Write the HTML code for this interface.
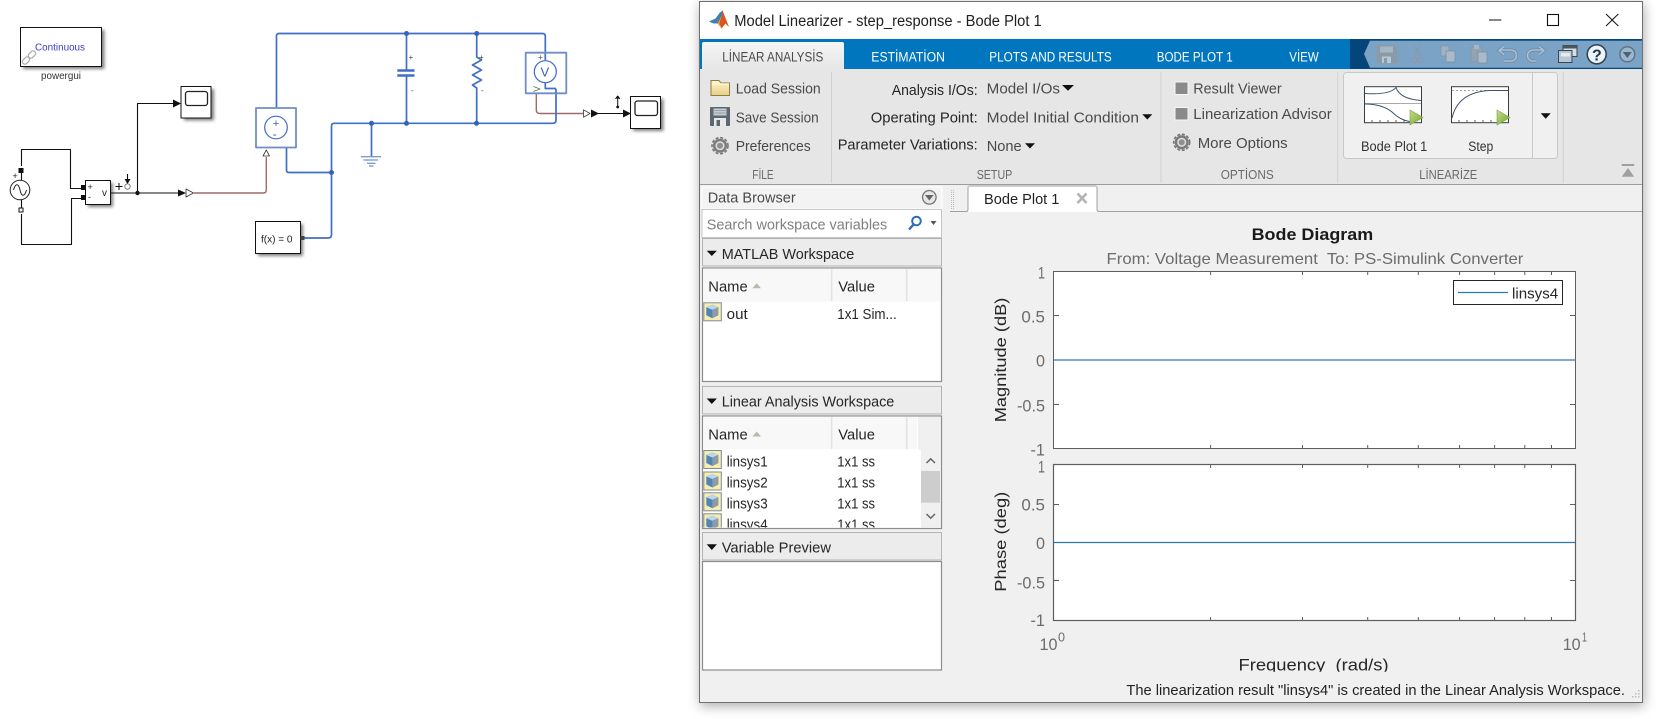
<!DOCTYPE html>
<html><head><meta charset="utf-8"><title>Model Linearizer</title>
<style>
html,body{margin:0;padding:0;background:#fff;width:1659px;height:719px;overflow:hidden}
svg{display:block;position:absolute;left:0;top:0}
text{font-family:"Liberation Sans",sans-serif;white-space:pre}
.r{font-size:15px;fill:#4a4a4a;transform:translateY(-.8px)}
.d{font-size:15px;fill:#262626}
.s{font-size:13px;fill:#6a6a6a}
.t{font-size:13.5px;fill:#fff}
.a{font-size:17px;fill:#6c6c6c}
</style></head><body>
<svg width="1659" height="719" viewBox="0 0 1659 719" xmlns="http://www.w3.org/2000/svg">
<defs>
<filter id="bs" x="-30%" y="-30%" width="160%" height="160%"><feGaussianBlur stdDeviation="1.6"/></filter>
<filter id="ws" x="-5%" y="-5%" width="110%" height="110%"><feGaussianBlur stdDeviation="6"/></filter>
<linearGradient id="fold" x1="0" y1="0" x2="0" y2="1"><stop offset="0" stop-color="#fff6cf"/><stop offset="1" stop-color="#e8cf82"/></linearGradient>
<linearGradient id="tabg" x1="0" y1="0" x2="0" y2="1"><stop offset="0" stop-color="#f5f5f5"/><stop offset="1" stop-color="#e6e6e6"/></linearGradient>
<linearGradient id="play" x1="0" y1="0" x2="1" y2="1"><stop offset="0" stop-color="#c4dc86"/><stop offset="1" stop-color="#6fa82e"/></linearGradient>
<g id="cube">
<rect x="0.5" y="0.5" width="17.5" height="18" fill="#f6eeb0" stroke="#7f8a98" stroke-width="1"/>
<path d="M3 5 L9 2.5 L15 5 L15 13 L9 16 L3 13Z" fill="#4f86b8"/>
<path d="M3 5 L9 2.5 L15 5 L9 7.5Z" fill="#b9d6ea"/>
<path d="M9 7.5 L15 5 L15 13 L9 16Z" fill="#8f9aa6"/>
</g>
<g id="gear">
<circle r="8" fill="none" stroke="#777" stroke-width="1.600" stroke-dasharray="3 1.700"/>
<circle r="7" fill="#7b7b7b"/>
<circle r="4.600" fill="#dcdcdc"/>
<circle r="3" fill="#8f8f8f"/>
</g>
<g id="play1"><path d="M0 0 L13 7.5 L0 15Z" fill="url(#play)" stroke="#7f9f52" stroke-width=".6"/></g>
</defs>

<rect width="1659" height="719" fill="#fff"/>

<!-- Simulink diagram -->
<g fill="none" stroke-linejoin="round">
 <g fill="#555" stroke="none" filter="url(#bs)" opacity=".75">
  <rect x="23" y="30" width="81.500" height="39"/>
  <rect x="184" y="89" width="30" height="31.500"/>
  <rect x="88" y="183" width="25" height="24"/>
  <rect x="258" y="224" width="45" height="32"/>
  <rect x="633" y="99" width="30.500" height="32"/>
 </g>
 <rect x="20.500" y="27.500" width="81" height="39" fill="#fff" stroke="#111" stroke-width="1"/>
 <rect x="181" y="86.500" width="30" height="31.500" fill="#fff" stroke="#111" stroke-width="1"/>
 <rect x="185.500" y="91.500" width="22" height="14" rx="2.500" stroke="#222" stroke-width="1.300"/>
 <rect x="85.500" y="180.500" width="25" height="24" fill="#fff" stroke="#111" stroke-width="1"/>
 <rect x="255.500" y="221.500" width="45" height="32" fill="#fff" stroke="#111" stroke-width="1"/>
 <rect x="630.500" y="96.500" width="30" height="32" fill="#fff" stroke="#111" stroke-width="1"/>
 <rect x="635" y="101" width="22.500" height="14.500" rx="2.500" stroke="#222" stroke-width="1.300"/>

 <g stroke="#111" stroke-width="1.100">
  <path d="M21.500 166 V149.500 H70.500 V188.500 H81"/>
  <path d="M21.500 214 V244.500 H71.500 V198.500 H81"/>
  <path d="M111 193 H178"/>
  <path d="M137.500 193 V103.500 H174"/>
  <path d="M598 113.500 H624"/>
  <path d="M127.500 174 V181"/>
  <path d="M21.500 170 V180 M21.500 200 V210"/>
 </g>
 <g fill="#111" stroke="none">
  <path d="M173 99.500 L181 103.500 L173 107.500Z"/>
  <path d="M178 189.500 L186 193 L178 196.500Z"/>
  <path d="M591 109.500 L599 113.500 L591 117.500Z"/>
  <path d="M623 109.500 L631 113.500 L623 117.500Z"/>
  <path d="M124.500 179 L130.500 179 L127.500 184Z"/>
  <circle cx="137.500" cy="193" r="2.200"/>
  <rect x="18.500" y="168" width="5" height="5"/>
  <rect x="81" y="185" width="5" height="5"/>
  <rect x="81" y="195" width="5" height="5"/>
  <rect x="300.500" y="236" width="4" height="4" fill="#444"/>
  <circle cx="617.700" cy="97.500" r="1.400"/><circle cx="617.700" cy="107" r="1.400"/>
 </g>
 <rect x="19" y="208" width="4" height="4" fill="#fff" stroke="#111" stroke-width="1"/>
 <path d="M617.700 97 V107 M615.500 99 L617.700 96 L619.900 99" stroke="#111" stroke-width="1"/>
 <circle cx="20" cy="190" r="9.800" fill="#fff" stroke="#222" stroke-width="1"/>
 <path d="M13.500 190 C15.500 183 18.500 183 20 190 C21.500 197 24.500 197 26.500 190" stroke="#222" stroke-width="1"/>
 <path d="M119 183 V190 M115.500 186.500 H122.500" stroke="#111" stroke-width="1"/>
 <circle cx="127.500" cy="186.500" r="2.700" stroke="#666" stroke-width=".8" fill="#fff"/>
 <path d="M186 189 L193.500 193 L186 197Z" fill="#fff" stroke="#333" stroke-width=".8"/>
 <path d="M583.500 109.800 L590 113.500 L583.500 117.200Z" fill="#fff" stroke="#333" stroke-width=".8"/>
 <path d="M263 156 L266.300 150 L269.500 156Z" fill="#fff" stroke="#333" stroke-width=".8"/>
 <path d="M194 193 H263.500 Q266.300 193 266.300 190 V157" stroke="#a06a6a" stroke-width="1.400"/>
 <path d="M536.300 94 V110 Q536.300 113.500 540 113.500 H583" stroke="#a06a6a" stroke-width="1.400"/>

 <g stroke="#3f6fc6" stroke-width="1.700">
  <path d="M276.500 108 V36 Q276.500 33.500 279 33.500 H542.500 Q545.300 33.500 545.300 36.500 V60"/>
  <path d="M286.500 147.500 V170 Q286.500 172.500 289 172.500 H331.500"/>
  <path d="M304.500 238 H328 Q331.500 238 331.500 234.500 V126 Q331.500 123.300 334 123.300 H553 Q556 123.300 556 120 V89"/>
  <path d="M371.500 123 V156"/>
  <path d="M406.500 33.500 V70 M406.500 75.500 V123"/>
  <path d="M476.700 33.500 V57 L481.500 60 L472.500 65 L481.500 70 L472.500 75 L481.500 80 L472.500 85 L476.700 88 V123"/>
  <path d="M545.300 83 V88.500 H556"/>
 </g>
 <g stroke="#3f6fc6" stroke-width="2.500"><path d="M397.300 70.500 H414.500 M397.300 75.500 H414.500"/></g>
 <g stroke="#4f78c4" stroke-width="1"><path d="M361 156.700 H381 M363.500 160 H378 M367 163.300 H375.500 M369 166 H373.500"/></g>
 <g fill="#3563b8" stroke="none">
  <circle cx="331.500" cy="172.500" r="2.500"/><circle cx="371.500" cy="123.300" r="2.500"/>
  <circle cx="406.500" cy="123.300" r="2.500"/><circle cx="476.500" cy="123.300" r="2.500"/>
  <circle cx="406.500" cy="33.500" r="2.500"/><circle cx="476.700" cy="33.500" r="2.500"/>
 </g>
 <rect x="256" y="108" width="40" height="39.500" stroke="#6f8ec8" stroke-width="1.800" fill="none"/>
 <circle cx="276" cy="127.500" r="11.300" stroke="#3f6ac4" stroke-width="1.200"/>
 <rect x="525.700" y="52.700" width="40.600" height="40.600" stroke="#6f8ec8" stroke-width="1.800" fill="none"/>
 <circle cx="545.300" cy="71.700" r="11" stroke="#3f6ac4" stroke-width="1.200" fill="#fff"/>
 <path d="M533.500 86.500 L540 89 L533.500 91.500" stroke="#55754f" stroke-width=".9"/>
 <path d="M556 88.500 V93" stroke="#3f6fc6" stroke-width="1"/>
 <g stroke="#aaa" stroke-width="1.200"><rect x="22" y="58" width="8" height="5" rx="2.200" transform="rotate(-45 26 60.500)"/><rect x="28" y="52" width="8" height="5" rx="2.200" transform="rotate(-45 32 54.500)"/></g>
</g>
<g font-size="10">
 <text x="35" y="50.500" style="font-size:10px;fill:#3a3ac8" textLength="50" lengthAdjust="spacingAndGlyphs">Continuous</text>
 <text x="41" y="79" style="font-size:10px;fill:#333" textLength="40" lengthAdjust="spacingAndGlyphs">powergui</text>
 <text x="261" y="242.500" style="font-size:10px;fill:#222" textLength="31.500" lengthAdjust="spacingAndGlyphs">f(x) = 0</text>
 <text x="102" y="196" style="font-size:10px;fill:#222">v</text>
 <text x="87.500" y="190" style="font-size:9px;fill:#222">+</text>
 <text x="88" y="200" style="font-size:9px;fill:#222">-</text>
 <text x="12.500" y="179" style="font-size:9px;fill:#222">+</text>
 <text x="272.800" y="127" style="font-size:11px;fill:#3a60b8">+</text>
 <text x="272.800" y="138" style="font-size:12px;fill:#3a60b8">-</text>
 <text x="540.500" y="76.500" style="font-size:13px;fill:#3a60b8">V</text>
 <text x="408.500" y="60" style="font-size:8px;fill:#444">+</text>
 <text x="411" y="93" style="font-size:8px;fill:#444">-</text>
 <text x="479" y="60" style="font-size:8px;fill:#444">+</text>
 <text x="481" y="93" style="font-size:8px;fill:#444">-</text>
 <text x="538" y="60" style="font-size:8px;fill:#444">+</text>
</g>

<!-- Window shadow + frame -->
<rect x="700" y="4" width="944" height="702" fill="#000" opacity=".33" filter="url(#ws)"/>
<rect x="699.500" y="1.500" width="943" height="701" fill="#f0f0f0" stroke="#6f6f6f" stroke-width="1"/>
<rect x="700" y="2" width="942" height="37" fill="#fff"/>

<!-- Title bar -->
<path d="M709 21.500 L715.500 18.500 L719.500 13 L722.500 10.500 L725 18 L722 27 L717.500 23.500 L713.500 23.500Z" fill="#3f7fb2"/>
<path d="M722.500 10.500 L729 27 L725.500 23.500 L721.500 28.500 L719.500 23 L722 15Z" fill="#d9541e"/>
<path d="M722 15 L719.500 23 L721.500 28.500 L717.500 23.500Z" fill="#ea9a3a"/>
<text x="734.300" y="26" style="font-size:15.500px;fill:#1f1f1f" textLength="307.400" lengthAdjust="spacingAndGlyphs">Model Linearizer - step_response - Bode Plot 1</text>
<path d="M1489 20 H1501.300" stroke="#111" stroke-width="1"/>
<rect x="1547.500" y="14.500" width="11" height="11" fill="none" stroke="#111" stroke-width="1.100"/>
<path d="M1606 14 L1618.300 26 M1618.300 14 L1606 26" stroke="#111" stroke-width="1"/>

<!-- Tab strip -->
<rect x="700" y="39" width="942" height="30" fill="#0076bf"/>
<rect x="1350" y="39" width="292" height="30" fill="#04467c"/>
<path d="M1364 54 L1370 40.700 H1642 V67.700 H1370Z" fill="#7ba3c6"/>
<path d="M702 44 Q702 42 704 42 H842 Q844 42 844 44 V69 H702Z" fill="url(#tabg)"/>
<text x="722.300" y="61.300" style="font-size:13.500px;fill:#4a4a4a" textLength="101" lengthAdjust="spacingAndGlyphs">LİNEAR ANALYSİS</text>
<text class="t" x="871.300" y="61.300" textLength="73.700" lengthAdjust="spacingAndGlyphs">ESTİMATİON</text>
<text class="t" x="989.300" y="61.300" textLength="122.400" lengthAdjust="spacingAndGlyphs">PLOTS AND RESULTS</text>
<text class="t" x="1156.700" y="61.300" textLength="76" lengthAdjust="spacingAndGlyphs">BODE PLOT 1</text>
<text class="t" x="1289.300" y="61.300" textLength="29.400" lengthAdjust="spacingAndGlyphs">VİEW</text>

<!-- Quick access icons -->
<g>
 <path d="M1377 45 H1394 L1397 48 V63 H1377Z" fill="#8c9aa6"/>
 <rect x="1380" y="46.500" width="13" height="6" fill="#a6b6c4"/>
 <rect x="1382" y="56.500" width="9" height="6.500" fill="#b8c8d6"/><rect x="1384" y="58" width="3" height="5" fill="#8c9aa6"/>
 <path d="M1420 45 L1414.500 57 M1415 46 L1420.500 57" stroke="#8b9aa8" stroke-width="1.400" fill="none"/>
 <circle cx="1414.500" cy="60" r="2.500" fill="none" stroke="#8b9aa8" stroke-width="1.200"/><circle cx="1420.500" cy="60" r="2.500" fill="none" stroke="#8b9aa8" stroke-width="1.200"/>
 <rect x="1441" y="46" width="8" height="10" fill="#a0b3c4" stroke="#8495a5" stroke-width=".8"/>
 <rect x="1446" y="51" width="9" height="11" fill="#a9bbcb" stroke="#7f909f" stroke-width=".8"/>
 <rect x="1471" y="47" width="11" height="15" fill="#92a3b3" stroke="#8495a5" stroke-width=".8"/>
 <rect x="1474" y="45" width="5" height="4" fill="#a6b6c4"/>
 <rect x="1478" y="52" width="9" height="11" fill="#a9bbcb" stroke="#7f909f" stroke-width=".8"/>
 <g fill="none">
 <path d="M1500 50 H1511 A5 5 0 0 1 1511 61 H1504 M1504 46.500 L1499 50.500 L1504 54.500" stroke="#6f8aa3" stroke-width="3.200"/>
 <path d="M1500 50 H1511 A5 5 0 0 1 1511 61 H1504 M1504 46.500 L1499 50.500 L1504 54.500" stroke="#a8c0d4" stroke-width="1.600"/>
 <path d="M1544 50 H1533 A5 5 0 0 0 1533 61 H1536 M1539 46.500 L1544 50.500 L1539 54.500" stroke="#6f8aa3" stroke-width="3.200"/>
 <path d="M1544 50 H1533 A5 5 0 0 0 1533 61 H1536 M1539 46.500 L1544 50.500 L1539 54.500" stroke="#a8c0d4" stroke-width="1.600"/>
 </g>
 <rect x="1563" y="45.500" width="14" height="11" fill="#d7dde3" stroke="#3c4650" stroke-width="1"/><rect x="1563" y="45.500" width="14" height="3" fill="#4a5560"/>
 <rect x="1558.500" y="50.500" width="13.500" height="12" fill="#b9c7d4" stroke="#3c4650" stroke-width="1"/><rect x="1561" y="53" width="9" height="3.500" fill="#e4ebf1"/>
 <circle cx="1596.700" cy="54.300" r="9.500" fill="#eef3f7" stroke="#32465a" stroke-width="1.600"/>
 <text x="1592" y="60.300" style="font-size:16px;font-weight:bold;fill:#24384c">?</text>
 <circle cx="1627.300" cy="54.300" r="7.500" fill="#9ab6cf" stroke="#5f7486" stroke-width="1.500"/>
 <path d="M1622.800 52 H1631.800 L1627.300 58Z" fill="#51626f"/>
</g>

<!-- Ribbon -->
<rect x="700" y="69" width="942" height="115" fill="#e6e6e6"/>
<path d="M700 184.500 H1642" stroke="#9c9c9c" stroke-width="1"/>
<g stroke="#d2d2d2" stroke-width="1"><path d="M831.500 72 V183 M1161 72 V183 M1337.700 72 V183 M1563.300 72 V183"/></g>
<path d="M711 80.500 H719 L721 83 H729.500 V95.500 H711Z" fill="url(#fold)" stroke="#8f7c43" stroke-width="1"/>
<path d="M711.500 84 H729" stroke="#fff7d2" stroke-width="1.500"/>
<rect x="710" y="107" width="20" height="19" rx="1" fill="#5e6770"/>
<rect x="713.500" y="108.500" width="13" height="7" fill="#c5ccd3"/><path d="M714 110.500 H726 M714 113 H726" stroke="#8a939b" stroke-width=".8"/>
<rect x="714" y="118" width="12" height="8" fill="#e6e9ec"/><rect x="716.500" y="120" width="3.500" height="6" fill="#5e6770"/>
<use href="#gear" x="720" y="145.700"/>
<text class="r" x="735.700" y="94.300" textLength="85" lengthAdjust="spacingAndGlyphs">Load Session</text>
<text class="r" x="735.700" y="123.300" textLength="83" lengthAdjust="spacingAndGlyphs">Save Session</text>
<text class="r" x="735.700" y="152" textLength="75" lengthAdjust="spacingAndGlyphs">Preferences</text>
<text class="s" x="752.300" y="179" textLength="21.400" lengthAdjust="spacingAndGlyphs">FİLE</text>
<text class="d" x="891.700" y="95" textLength="86" lengthAdjust="spacingAndGlyphs">Analysis I/Os:</text>
<text class="d" x="870.700" y="122.300" textLength="107" lengthAdjust="spacingAndGlyphs">Operating Point:</text>
<text class="d" x="837.700" y="149.300" textLength="140" lengthAdjust="spacingAndGlyphs">Parameter Variations:</text>
<text class="r" x="986.700" y="94.300" textLength="73.300" lengthAdjust="spacingAndGlyphs">Model I/Os</text>
<text class="r" x="986.700" y="123.300" textLength="152.300" lengthAdjust="spacingAndGlyphs">Model Initial Condition</text>
<text class="r" x="986.700" y="152" textLength="35" lengthAdjust="spacingAndGlyphs">None</text>
<g fill="#111">
 <path d="M1062 85 H1074 L1068 90.700Z"/><path d="M1142.300 114.300 H1152.300 L1147.300 119.500Z"/><path d="M1025 143.300 H1035 L1030 148.500Z"/>
</g>
<text class="s" x="976.700" y="179" textLength="35.600" lengthAdjust="spacingAndGlyphs">SETUP</text>
<rect x="1175" y="82" width="13" height="12.500" fill="#8a8a8a" stroke="#f6f6f6" stroke-width="1"/>
<rect x="1175" y="107.500" width="13" height="12.500" fill="#8a8a8a" stroke="#f6f6f6" stroke-width="1"/>
<use href="#gear" x="1181.700" y="142.300"/>
<text class="r" x="1193.300" y="94.300" textLength="88.400" lengthAdjust="spacingAndGlyphs">Result Viewer</text>
<text class="r" x="1193.300" y="120" textLength="138.400" lengthAdjust="spacingAndGlyphs">Linearization Advisor</text>
<text class="r" x="1197.700" y="149" textLength="90" lengthAdjust="spacingAndGlyphs">More Options</text>
<text class="s" x="1220.700" y="179" textLength="53" lengthAdjust="spacingAndGlyphs">OPTİONS</text>
<rect x="1343.500" y="72.500" width="214" height="86" rx="3" fill="#f0f0f0" stroke="#c8c8c8" stroke-width="1"/>
<path d="M1532.500 73 V158" stroke="#c8c8c8" stroke-width="1"/>
<path d="M1540.700 113.300 H1550.700 L1545.700 118.700Z" fill="#111"/>
<g fill="#fff" stroke="#3a3a3a" stroke-width="1">
 <rect x="1364.500" y="86.700" width="57" height="36"/>
 <rect x="1451.500" y="86.700" width="57" height="36"/>
</g>
<path d="M1365 103.500 H1421" stroke="#aaa" stroke-width="1"/>
<path d="M1365 93.500 Q1390 95 1396 87.500 Q1400 99 1421 100.500" fill="none" stroke="#3f5368" stroke-width="1"/>
<path d="M1365 104 Q1382 104 1392 112 Q1402 122 1415 122" fill="none" stroke="#3f5368" stroke-width="1"/>
<path d="M1452 90.500 H1508" stroke="#888" stroke-width=".8" stroke-dasharray="2 2"/>
<path d="M1452 118 Q1458 92 1490 90.500 H1508" fill="none" stroke="#3f5368" stroke-width="1"/>
<g stroke="#3a3a3a" stroke-width=".8"><path d="M1372 122 V120 M1380 122 V120 M1388 122 V120 M1396 122 V120 M1404 122 V120 M1459 122 V120 M1467 122 V120 M1475 122 V120 M1483 122 V120 M1491 122 V120"/></g>
<use href="#play1" x="1410" y="110"/>
<use href="#play1" x="1497" y="110"/>
<text x="1361" y="151" style="font-size:13.500px;fill:#333" textLength="66.300" lengthAdjust="spacingAndGlyphs">Bode Plot 1</text>
<text x="1468.300" y="151" style="font-size:13.500px;fill:#333" textLength="25" lengthAdjust="spacingAndGlyphs">Step</text>
<text class="s" x="1419.300" y="179" textLength="58" lengthAdjust="spacingAndGlyphs">LİNEARİZE</text>
<rect x="1621.700" y="164" width="12.500" height="2" fill="#a0a0a0"/><path d="M1621.700 176.700 L1628 168 L1634.200 176.700Z" fill="#a0a0a0"/>

<!-- Data browser -->
<rect x="702" y="187" width="240" height="22" fill="#f3f3f3" stroke="#fff" stroke-width="1"/>
<text class="r" x="707.700" y="203.500" textLength="88" lengthAdjust="spacingAndGlyphs">Data Browser</text>
<circle cx="929.300" cy="197.300" r="6.800" fill="#e6e6e6" stroke="#777" stroke-width="1.300"/>
<path d="M925 195 H933.600 L929.300 200.500Z" fill="#666"/>
<rect x="702" y="209.500" width="239.500" height="28" fill="#fff" stroke="#bbb" stroke-width=".8"/>
<text x="706.700" y="229.500" style="font-size:15px;fill:#808080" textLength="180.600" lengthAdjust="spacingAndGlyphs">Search workspace variables</text>
<circle cx="916.500" cy="221" r="4.300" fill="#fff" stroke="#2b6fb8" stroke-width="2"/>
<path d="M913.500 224.500 L909 229.500" stroke="#2b6fb8" stroke-width="2.400"/>
<path d="M930.500 221 H936.500 L933.500 225Z" fill="#555"/>

<g fill="#ececec" stroke="#a5a5a5" stroke-width=".8">
 <rect x="702.500" y="238.500" width="239" height="27.500"/>
 <rect x="702.500" y="386.300" width="239" height="27.700"/>
 <rect x="702.500" y="532.500" width="239" height="27.500"/>
</g>
<g fill="#111"><path d="M706.700 250.700 H716.900 L711.800 256Z"/><path d="M706.700 398.500 H716.900 L711.800 404Z"/><path d="M706.700 544.300 H716.900 L711.800 550Z"/></g>
<text class="d" x="721.700" y="259" textLength="132.600" lengthAdjust="spacingAndGlyphs">MATLAB Workspace</text>
<text class="d" x="721.700" y="406.500" textLength="172.600" lengthAdjust="spacingAndGlyphs">Linear Analysis Workspace</text>
<text class="d" x="721.700" y="552.700" textLength="109.300" lengthAdjust="spacingAndGlyphs">Variable Preview</text>

<!-- Table 1 -->
<rect x="702.500" y="268" width="239" height="113.500" fill="#fff" stroke="#8c8c8c" stroke-width="1.200"/>
<rect x="703.200" y="268.700" width="237.600" height="33" fill="#f8f8f8"/>
<path d="M831.700 269 V301 M906.700 269 V301" stroke="#e2e2e2" stroke-width="1.500"/>
<text class="d" x="708.300" y="291.700" textLength="39.400" lengthAdjust="spacingAndGlyphs">Name</text>
<path d="M752.300 288.300 H761 L756.700 283.300Z" fill="#b9b9ad"/>
<text class="d" x="838.300" y="291.700" textLength="36.700" lengthAdjust="spacingAndGlyphs">Value</text>
<use href="#cube" x="703.300" y="302.300"/>
<text class="d" x="726.700" y="319" textLength="21" lengthAdjust="spacingAndGlyphs">out</text>
<text class="d" x="837.300" y="319" textLength="59.400" lengthAdjust="spacingAndGlyphs">1x1 Sim...</text>

<!-- Table 2 -->
<rect x="702.500" y="416" width="239" height="112.500" fill="#fff" stroke="#8c8c8c" stroke-width="1.200"/>
<rect x="703.200" y="416.700" width="214" height="32.600" fill="#f8f8f8"/>
<rect x="918" y="416.700" width="22.800" height="33" fill="#f0f0f0"/>
<path d="M831.700 417 V449 M906.700 417 V449" stroke="#e2e2e2" stroke-width="1.500"/>
<text class="d" x="708.300" y="439.500" textLength="39.400" lengthAdjust="spacingAndGlyphs">Name</text>
<path d="M752.300 436.500 H761 L756.700 431.500Z" fill="#b9b9ad"/>
<text class="d" x="838.300" y="439.500" textLength="36.700" lengthAdjust="spacingAndGlyphs">Value</text>
<rect x="921" y="449" width="19.800" height="78.700" fill="#f0f0f0"/>
<rect x="921" y="471" width="19" height="31.700" fill="#cdcdcd"/>
<path d="M926.500 463 L930.700 458.800 L935 463 M926.500 514 L930.700 518.200 L935 514" fill="none" stroke="#666" stroke-width="1.500"/>
<use href="#cube" x="703.300" y="450"/>
<use href="#cube" x="703.300" y="471.500"/>
<use href="#cube" x="703.300" y="492.300"/>
<text class="d" x="726.700" y="466.700" textLength="41" lengthAdjust="spacingAndGlyphs">linsys1</text>
<text class="d" x="726.700" y="487.700" textLength="41" lengthAdjust="spacingAndGlyphs">linsys2</text>
<text class="d" x="726.700" y="508.700" textLength="41" lengthAdjust="spacingAndGlyphs">linsys3</text>
<text class="d" x="837.300" y="466.700" textLength="37.700" lengthAdjust="spacingAndGlyphs">1x1 ss</text>
<text class="d" x="837.300" y="487.700" textLength="37.700" lengthAdjust="spacingAndGlyphs">1x1 ss</text>
<text class="d" x="837.300" y="508.700" textLength="37.700" lengthAdjust="spacingAndGlyphs">1x1 ss</text>
<svg x="703" y="512" width="217" height="15.500">
 <use href="#cube" x="0.300" y="1.300"/>
 <text class="d" x="23.700" y="17.700" textLength="41" lengthAdjust="spacingAndGlyphs">linsys4</text>
 <text class="d" x="134.300" y="17.700" textLength="37.700" lengthAdjust="spacingAndGlyphs">1x1 ss</text>
</svg>

<!-- Table 3 -->
<rect x="702.500" y="561.500" width="239" height="108.500" fill="#fff" stroke="#8c8c8c" stroke-width="1.200"/>

<!-- Splitter grip & document tab -->
<path d="M951.500 190 V210 M953.500 190 V210" stroke="#bdbdbd" stroke-width="1" stroke-dasharray="1 1"/>
<path d="M950 211.500 H966 Q968 211.500 968 209 V188 Q968 186 970 186 H1095 Q1097 186 1097 188 V209 Q1097 211.500 1099 211.500 H1642" fill="none" stroke="#a0a0a0" stroke-width="1"/>
<rect x="968.500" y="186.500" width="128" height="25.500" fill="#fff"/>
<text x="984" y="204" style="font-size:15px;fill:#222" textLength="75.400" lengthAdjust="spacingAndGlyphs">Bode Plot 1</text>
<path d="M1077.500 193.500 L1086.500 203 M1086.500 193.500 L1077.500 203" stroke="#b4b4b4" stroke-width="2.600"/>

<!-- Plot -->
<text x="1251.600" y="240" style="font-size:17px;font-weight:bold;fill:#1a1a1a" textLength="121.600" lengthAdjust="spacingAndGlyphs">Bode Diagram</text>
<text x="1106.500" y="264" style="font-size:16px;fill:#6c6c6c" textLength="416.900" lengthAdjust="spacingAndGlyphs">From: Voltage Measurement  To: PS-Simulink Converter</text>

<rect x="1053.500" y="271.500" width="522" height="177" fill="#fff" stroke="#5e5e5e" stroke-width="1"/>
<rect x="1053.500" y="464.500" width="522" height="156" fill="#fff" stroke="#5e5e5e" stroke-width="1.200"/>
<g stroke="#5e5e5e" stroke-width="1" fill="none">
 <path d="M1210.600 272 v3 M1302.500 272 v3 M1367.700 272 v3 M1418.300 272 v3 M1459.600 272 v3 M1494.600 272 v3 M1524.800 272 v3 M1551.500 272 v3"/>
 <path d="M1210.600 448 v-3 M1302.500 448 v-3 M1367.700 448 v-3 M1418.300 448 v-3 M1459.600 448 v-3 M1494.600 448 v-3 M1524.800 448 v-3 M1551.500 448 v-3"/>
 <path d="M1210.600 465 v3 M1302.500 465 v3 M1367.700 465 v3 M1418.300 465 v3 M1459.600 465 v3 M1494.600 465 v3 M1524.800 465 v3 M1551.500 465 v3"/>
 <path d="M1210.600 620 v-3 M1302.500 620 v-3 M1367.700 620 v-3 M1418.300 620 v-3 M1459.600 620 v-3 M1494.600 620 v-3 M1524.800 620 v-3 M1551.500 620 v-3"/>
 <path d="M1054 315.500 h5 M1054 404.500 h5 M1570 315.500 h5 M1570 404.500 h5 M1054 504.500 h5 M1054 580.500 h5 M1570 504.500 h5 M1570 580.500 h5"/>
</g>
<path d="M1054 360 H1575" stroke="#7eaacb" stroke-width="2"/>
<path d="M1054 542.500 H1575" stroke="#2a78b2" stroke-width="1.200"/>
<rect x="1453.500" y="280.500" width="109" height="24" fill="#fff" stroke="#262626" stroke-width="1"/>
<path d="M1458 292.500 H1508" stroke="#2a78b2" stroke-width="1.200"/>
<text x="1512" y="298.300" style="font-size:15px;fill:#262626" textLength="46.200" lengthAdjust="spacingAndGlyphs">linsys4</text>

<text class="a" x="1038" y="278.300" textLength="7" lengthAdjust="spacingAndGlyphs">1</text>
<text class="a" x="1021.400" y="322.300" textLength="23.600" lengthAdjust="spacingAndGlyphs">0.5</text>
<text class="a" x="1036" y="366.700" textLength="9" lengthAdjust="spacingAndGlyphs">0</text>
<text class="a" x="1017" y="411.700" textLength="28" lengthAdjust="spacingAndGlyphs">-0.5</text>
<text class="a" x="1030.500" y="455.700" textLength="14.500" lengthAdjust="spacingAndGlyphs">-1</text>
<text class="a" x="1038" y="472.700" textLength="7" lengthAdjust="spacingAndGlyphs">1</text>
<text class="a" x="1021.400" y="510.700" textLength="23.600" lengthAdjust="spacingAndGlyphs">0.5</text>
<text class="a" x="1036" y="549" textLength="9" lengthAdjust="spacingAndGlyphs">0</text>
<text class="a" x="1017" y="588.300" textLength="28" lengthAdjust="spacingAndGlyphs">-0.5</text>
<text class="a" x="1030.500" y="626" textLength="14.500" lengthAdjust="spacingAndGlyphs">-1</text>

<text class="a" x="1039.500" y="650" textLength="18" lengthAdjust="spacingAndGlyphs">10</text>
<text x="1058" y="641.700" style="font-size:13px;fill:#6c6c6c" textLength="7" lengthAdjust="spacingAndGlyphs">0</text>
<text class="a" x="1562.700" y="650" textLength="18" lengthAdjust="spacingAndGlyphs">10</text>
<text x="1582" y="641.700" style="font-size:13px;fill:#6c6c6c" textLength="5" lengthAdjust="spacingAndGlyphs">1</text>

<text transform="translate(1006 422.300) rotate(-90)" style="font-size:16px;fill:#262626" textLength="124.600" lengthAdjust="spacingAndGlyphs">Magnitude (dB)</text>
<text transform="translate(1006 591.700) rotate(-90)" style="font-size:16px;fill:#262626" textLength="100" lengthAdjust="spacingAndGlyphs">Phase (deg)</text>

<svg x="1200" y="650" width="240" height="21.700">
 <text x="38.500" y="20.700" style="font-size:17px;fill:#262626" textLength="150.100" lengthAdjust="spacingAndGlyphs">Frequency  (rad/s)</text>
</svg>

<text x="1126.400" y="695" style="font-size:14.500px;fill:#222" textLength="498.600" lengthAdjust="spacingAndGlyphs">The linearization result "linsys4" is created in the Linear Analysis Workspace.</text>
<g fill="#bdbdbd"><rect x="1638" y="690" width="1.500" height="1.500"/><rect x="1635" y="693" width="1.500" height="1.500"/><rect x="1638" y="693" width="1.500" height="1.500"/><rect x="1632" y="696" width="1.500" height="1.500"/><rect x="1635" y="696" width="1.500" height="1.500"/><rect x="1638" y="696" width="1.500" height="1.500"/></g>
</svg>
</body></html>
